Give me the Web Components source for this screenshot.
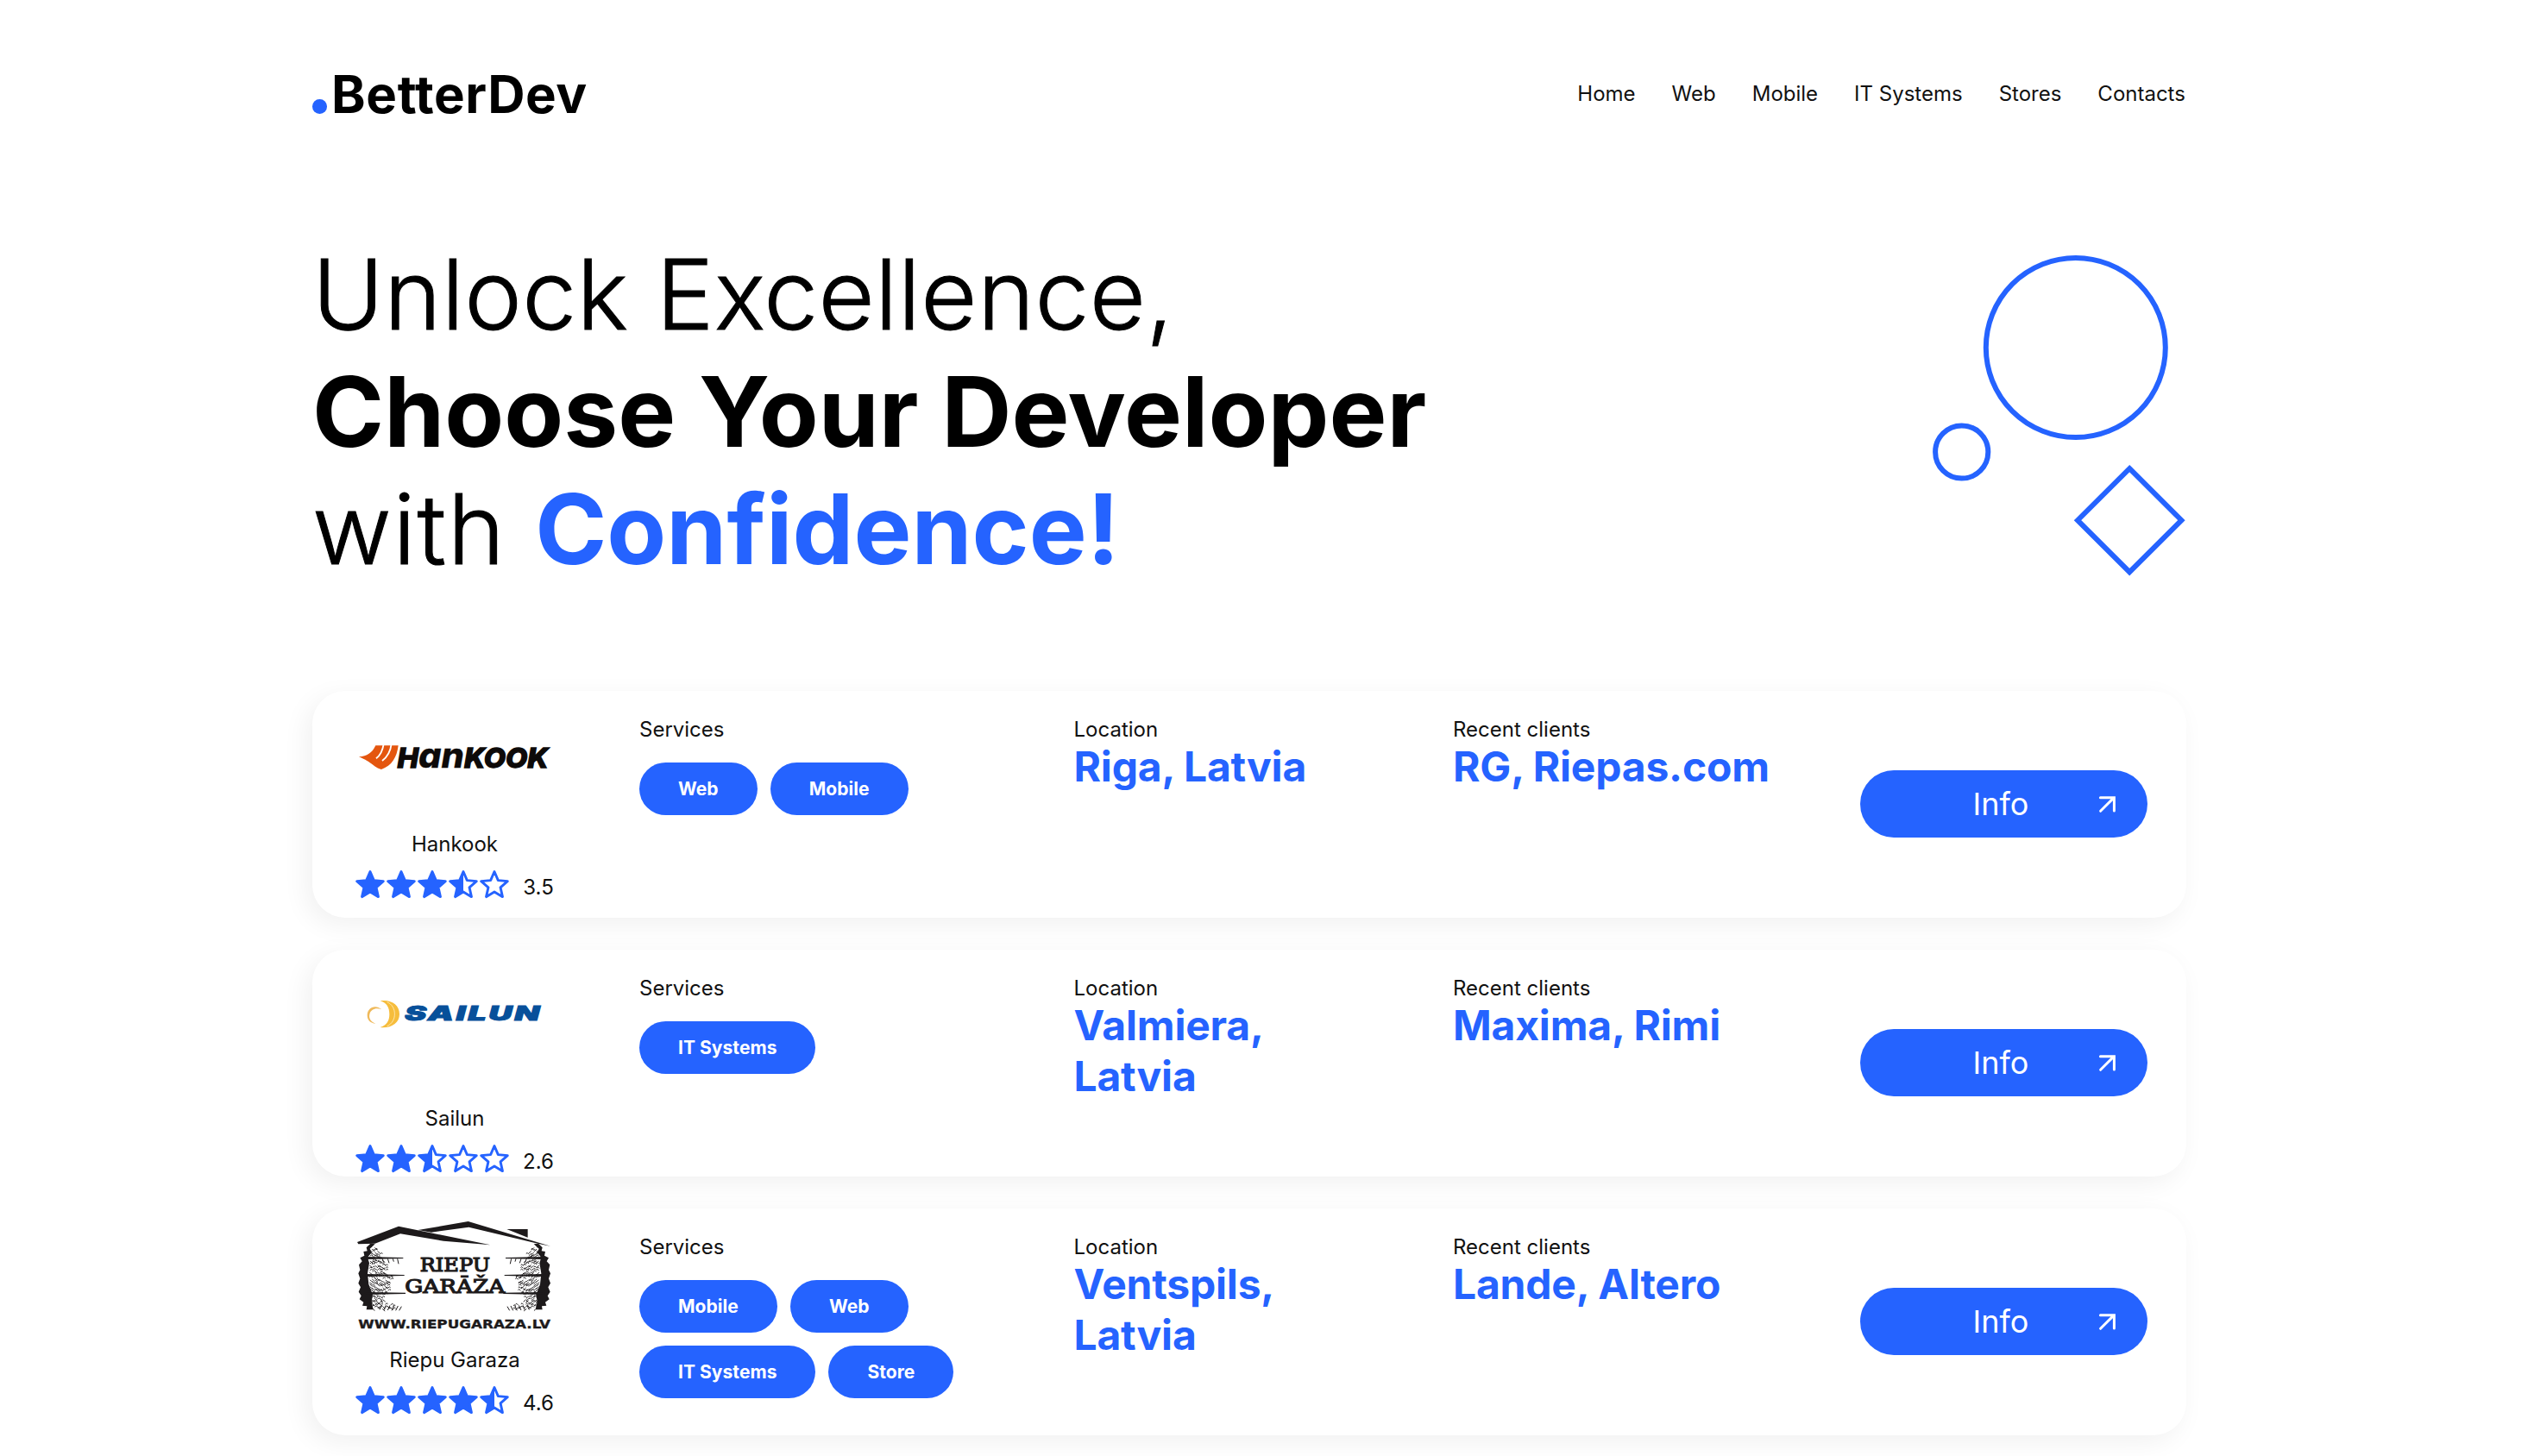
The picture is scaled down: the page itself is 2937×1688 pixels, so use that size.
<!DOCTYPE html>
<html lang="en">
<head>
<meta charset="utf-8">
<title>BetterDev</title>
<style>
html,body{margin:0;background:#fff}
html{height:1688px;overflow:hidden}
body{width:2937px;height:1688px;overflow:hidden;font-family:Inter,"Liberation Sans",sans-serif;color:#000;--blue:#2563ff}
</style>
</head>
<body>
<better-app></better-app>
<script>
const def=(name,html,setup)=>{
  const t=document.createElement('template');t.innerHTML=html;
  customElements.define(name,class extends HTMLElement{
    connectedCallback(){
      if(this.shadowRoot)return;
      const r=this.attachShadow({mode:'open'});
      r.append(t.content.cloneNode(true));
      if(setup)setup(this,r);
    }
  });
};

/* tread marks for the two tyre sides of the Riepu Garaza emblem */
const tread=()=>{
  let s='',seed=7;const rnd=()=>(seed=(seed*16807)%2147483647)/2147483647;
  for(let y=172;y<388;y+=8){
    const bulge=Math.sin((y-150)/240*Math.PI);
    const reach=y>365?105:25+bulge*55+(y>260?12:0);
    for(let x=18;x<reach;x+=9){
      const a=x+rnd()*3,b=y+(Math.round(x/9)%2?3:-2)+rnd()*3;
      s+=`M${(110+a-14).toFixed(1)} ${b.toFixed(1)}l5 ${(rnd()>.5?5:-5)}l4 3`;
    }
  }
  return s;
};
const tyre=`<g><path fill="#1d1a1b" d="M118 158L104 172L107 184L94 186L97 200L82 208L89 220L78 232L82 250L76 262L82 280L76 296L84 310L77 326L86 340L80 352L94 362L90 374L106 376L104 388L128 388L122 360L126 336L112 300L108 262L114 226L108 206L122 190L116 176L134 160Z"/>
<path d="${tread()}" fill="none" stroke="#1d1a1b" stroke-width="2.9"/>
<path fill="#1d1a1b" d="M104 204L232 207L232 210L104 213ZM100 264L236 267L236 270L100 273ZM96 327L240 329L240 333L96 336Z"/>
<path stroke="#1d1a1b" stroke-width="3" fill="none" d="M150 388l8-16M164 390l8-17M178 390l8-17M192 391l8-17M206 391l8-16M218 391l8-14M160 212l4 12M178 211l5 15M196 211l3 10M212 211l4 18"/></g>`;

const logos={
hankook:`<g transform="translate(-1 48) scale(.33333)">
<path fill="#e4560f" d="M18 85C46 84 64 72 76 46L155 46C150 86 133 117 96 129C72 124 64 104 18 85Z"/>
<path fill="none" stroke="#fff" stroke-width="5.5" d="M104 40C101 62 93 79 78 91M131 40C128 66 117 85 99 99"/></g>
<text transform="translate(49.5 88.6)" font-family="Inter,sans-serif" font-weight="800" font-style="italic" font-size="31.5" fill="#0d0a09" stroke="#0d0a09" stroke-width="1.3" textLength="175" lengthAdjust="spacingAndGlyphs">H<tspan font-size="40" stroke-width=".3">an</tspan>KOOK</text>`,
sailun:`<g transform="translate(-21 28) scale(.33333)">
<path fill="#f6bd3c" d="M152 94C190 88 219 108 219 140C219 171 190 190 152 186C174 179 184 164 184 141C184 116 174 101 152 94Z"/>
<path fill="none" stroke="#fde6ae" stroke-width="3" d="M176 98C211 113 211 166 176 182"/>
<path fill="#efb95a" d="M157 124C134 104 107 119 107 144C107 162 119 172 136 173C119 166 112 155 115 141C119 122 139 116 157 124Z"/></g>
<text transform="translate(58 82) scale(1.7 1)" font-family="Inter,sans-serif" font-weight="900" font-style="italic" font-size="22.3" fill="#07509a" stroke="#07509a" stroke-width=".9" textLength="92" lengthAdjust="spacing">SAILUN</text>`,
riepu:`<g transform="translate(-21 -12) scale(.33333)">
<path fill="#1d1a1b" d="M72 153L216 98L535 163L372 149L222 124L134 158L76 160ZM284 111L458 81L744 167L700 158L460 101L330 119ZM592 108L665 108L665 137Z"/>
${tyre}<g transform="translate(820 0) scale(-1 1)">${tyre}</g>
<g fill="#1d1a1b" stroke="#1d1a1b" font-family="'DejaVu Serif','Liberation Serif',serif">
<text x="290" y="255" font-size="65" stroke-width="3.6" textLength="244" lengthAdjust="spacingAndGlyphs">RIEPU</text>
<text x="238" y="329" font-size="65" stroke-width="3.6" textLength="348" lengthAdjust="spacingAndGlyphs">GARĀŽA</text></g>
<text x="76" y="452" font-family="'DejaVu Sans',sans-serif" font-weight="700" font-size="41" fill="#1d1a1b" stroke="#1d1a1b" stroke-width="1" textLength="668" lengthAdjust="spacingAndGlyphs">WWW.RIEPUGARAZA.LV</text></g>`
};

def('brand-logo',`<style>
:host{display:flex;align-items:flex-end;gap:5.6px;font-weight:700;font-size:60px;line-height:72.6px;letter-spacing:.55px}
i{display:block;width:16.5px;height:16.5px;border-radius:50%;background:var(--blue);margin-bottom:13.7px}
</style><i></i><span><slot></slot></span>`);

def('nav-bar',`<style>
:host{display:flex;gap:42px;font-size:24px;line-height:29px;color:#111;margin-right:1.1px}
</style><slot></slot>`);

def('hero-shapes',`<style>:host,svg{display:block}</style>
<svg width="294" height="372" viewBox="0 0 294 372" fill="none" stroke="#2563ff" stroke-width="6">
<circle cx="165.8" cy="107" r="104"/><circle cx="33.7" cy="228" r="30.6"/>
<path d="M228.2 247.2L288.4 307.2L228.2 367.2L168 307.2Z"/></svg>`);

def('hero-title',`<style>
:host{display:block}
h1{margin:0;font-size:112.5px;line-height:136px;font-weight:300}
.u,.w{-webkit-text-stroke:1px #000}
.u{letter-spacing:.36px}
.w{letter-spacing:1.75px}
b{font-weight:700}.c{color:var(--blue)}
</style><h1><span class="u">Unlock Excellence,</span><br><b>Choose Your Developer</b><br><span class="w">with </span><b class="c">Confidence!</b></h1>`);

def('star-rating',`<style>
:host{display:flex;align-items:flex-start;justify-content:center;gap:15px;font-size:24px;line-height:29px;color:#111}
.s{display:flex;margin-left:-1px}svg{display:block}span{margin-top:6.7px}
</style><div class="s"></div><span></span>`,(el,r)=>{
  const v=+el.getAttribute('value');
  const pts=[];
  for(let i=0;i<10;i++){const a=-Math.PI/2+i*Math.PI/5,q=i%2?7.4:16.1;pts.push((18+q*Math.cos(a)).toFixed(2)+','+(19.6+q*Math.sin(a)).toFixed(2))}
  const p=pts.join(' '),half=['18,3.5',...pts.slice(5)].join(' ');
  let h='';
  for(let i=0;i<5;i++){
    const d=v-i;
    h+=`<svg width="36" height="36" viewBox="0 0 36 36" stroke="#2563ff" stroke-width="2.9" stroke-linejoin="round"><polygon points="${p}" fill="${d>=1?'#2563ff':'none'}"/>${d>0&&d<1?`<polygon points="${half}" fill="#2563ff" stroke="none"/>`:''}</svg>`;
  }
  r.querySelector('.s').innerHTML=h;
  r.querySelector('span').textContent=v;
});

def('service-pill',`<style>
:host{display:flex;align-items:center;height:60.7px;padding:0 45px;border-radius:31px;background:var(--blue);color:#fff;font-weight:700;font-size:21px;line-height:25px;letter-spacing:.05px}
</style><slot></slot>`);

def('info-button',`<style>
:host{display:flex;align-items:center;justify-content:center;box-sizing:border-box;width:333px;height:78px;border-radius:39px;background:var(--blue);color:#fff;font-size:36px;line-height:44px;padding:0 34px 0 27px}
.e{flex:1}svg{display:block;margin-left:auto}
</style><div class="e"></div><slot></slot><div class="e"><svg width="25" height="25" viewBox="0 0 25 25" fill="none" stroke="#fff" stroke-width="3" stroke-linecap="round" stroke-linejoin="miter"><path d="M4.6 20.3L20 4.9M4.4 4.7H20.4V20"/></svg></div>`);

def('company-logo',`<style>:host,svg{display:block}</style><svg width="232"></svg>`,(el,r)=>{
  const s=r.querySelector('svg'),h=el.getAttribute('height');
  s.setAttribute('height',h);s.setAttribute('viewBox','0 0 232 '+h);
  s.innerHTML=logos[el.getAttribute('kind')];
});

def('info-field',`<style>
:host{display:block;padding-top:30px}
.l{font-size:24px;line-height:29px;color:#111}
.v{font-size:48px;line-height:58.5px;font-weight:700;letter-spacing:-.2px;color:var(--blue);max-width:var(--field,420px)}
</style><div class="l"></div><div class="v"><slot></slot></div>`,(el,r)=>{r.querySelector('.l').textContent=el.getAttribute('label')});

def('developer-card',`<style>
:host{display:grid;grid-template-columns:330px 503.5px 439.5px 472px 333px;box-sizing:border-box;width:2172px;height:263px;padding:0 45px 0 49px;border-radius:38px;background:#fff;box-shadow:-7px 8px 30px rgba(0,0,0,.06)}
.who{width:232px}
.name{font-size:24px;line-height:29px;text-align:center;color:#111;margin-bottom:14px}
.srv{padding-top:30px;font-size:24px;line-height:29px;color:#111}
.pills{display:flex;flex-wrap:wrap;gap:15.3px 15px;margin-top:24px}
.loc{--field:330px}
info-button{margin-top:91.6px}
</style>
<div class="who"></div>
<div class="srv"><div>Services</div><div class="pills"></div></div>
<info-field class="loc" label="Location"></info-field>
<info-field class="cli" label="Recent clients"></info-field>
<info-button>Info</info-button>`,(el,r)=>{
  const g=n=>el.getAttribute(n);
  r.querySelector('.who').innerHTML=`<company-logo kind="${g('logo')}" height="${g('logo-height')}"></company-logo><div class="name">${g('name')}</div><star-rating value="${g('rating')}"></star-rating>`;
  r.querySelector('.pills').innerHTML=g('services').split('|').map(s=>`<service-pill>${s}</service-pill>`).join('');
  r.querySelector('.loc').textContent=g('location');
  r.querySelector('.cli').textContent=g('clients');
});

def('better-app',`<style>
:host{display:block;box-sizing:border-box;height:1688px;overflow:hidden;padding:72.6px 0 0 362px}
header{display:flex;justify-content:space-between;align-items:center;width:2172px}
.hero{display:flex;justify-content:space-between;width:2172px;margin-top:128.1px;height:528.2px}
hero-shapes{margin-top:22.6px}
main{display:flex;flex-direction:column;gap:37px}
</style>
<header><brand-logo>BetterDev</brand-logo>
<nav-bar><span>Home</span><span>Web</span><span>Mobile</span><span>IT Systems</span><span>Stores</span><span>Contacts</span></nav-bar></header>
<div class="hero"><hero-title></hero-title><hero-shapes></hero-shapes></div>
<main>
<developer-card logo="hankook" logo-height="163" name="Hankook" rating="3.5" services="Web|Mobile" location="Riga, Latvia" clients="RG, Riepas.com"></developer-card>
<developer-card logo="sailun" logo-height="180.4" name="Sailun" rating="2.6" services="IT Systems" location="Valmiera, Latvia" clients="Maxima, Rimi"></developer-card>
<developer-card logo="riepu" logo-height="160.7" name="Riepu Garaza" rating="4.6" services="Mobile|Web|IT Systems|Store" location="Ventspils, Latvia" clients="Lande, Altero"></developer-card>
</main>`);
</script>
</body>
</html>
